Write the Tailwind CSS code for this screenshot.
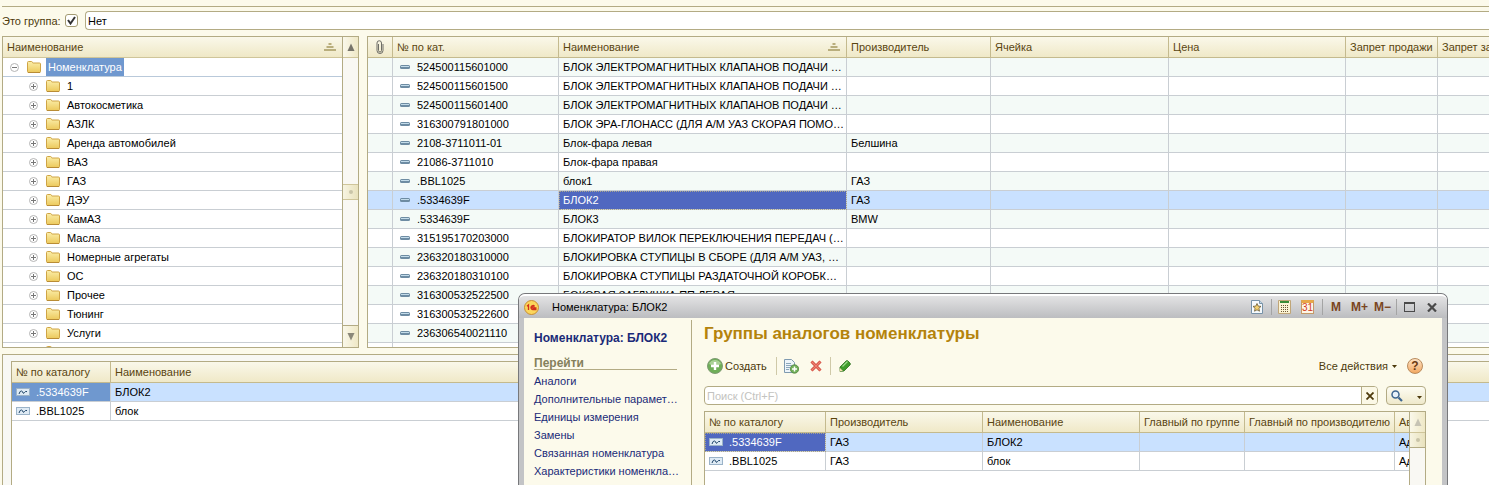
<!DOCTYPE html>
<html lang="ru">
<head>
  <meta charset="UTF-8" />
  <meta name="viewport" content="width=device-width, initial-scale=1.0"/>
  <title>Номенклатура</title>
  <script src="https://cdn.jsdelivr.net/npm/@tailwindcss/browser@4"></script>
</head>
<body class="relative flex h-screen flex-col overflow-hidden bg-[#fcfaeb] pl-[2px] font-['Liberation_Sans',Arial,sans-serif] text-[11px] leading-[18px] text-black">

  <!-- shared icons -->
  <svg class="absolute h-0 w-0">
    <linearGradient id="gold" x2="0" y2="1"><stop stop-color="#fbeeaa"/><stop offset="1" stop-color="#ecc95c"/></linearGradient>
    <symbol id="folder" viewBox="0 0 14 12">
      <path d="M.5 1.500q0-1 1-1h3q.8 0 1 1l.3.500h6.700q1 0 1 1v7.500q0 1-1 1h-11q-1 0-1-1z" fill="url(#gold)" stroke="#cfa445"/>
      <path d="M1 11.500h12" stroke="#b98c35"/>
    </symbol>
    <symbol id="plus" viewBox="0 0 9 9">
      <circle cx="4.500" cy="4.500" r="4" fill="#fff" stroke="#b4b4b4"/>
      <path d="M2 4.500h5M4.500 2v5" stroke="#777"/>
    </symbol>
    <symbol id="minus" viewBox="0 0 9 9">
      <circle cx="4.500" cy="4.500" r="4" fill="#fff" stroke="#b4b4b4"/>
      <path d="M2 4.500h5" stroke="#777"/>
    </symbol>
    <symbol id="sort" viewBox="0 0 12 8">
      <path d="M4.500 0h3v2h-3zM2.500 3h7v2h-7zM0 6h12v2H0z" fill="#b9ae7c"/>
    </symbol>
    <symbol id="item" viewBox="0 0 10 4">
      <rect width="10" height="4" rx="1.500" fill="#6d8ca3"/>
      <path d="M1 1.500h8" stroke="#c3dcea"/>
    </symbol>
    <symbol id="record" viewBox="0 0 14 8">
      <rect x=".5" y=".5" width="13" height="7" fill="#dfebf5" stroke="#9bb3c8"/>
      <path d="M3 6q1-3.500 2.500-3t1.500 2q1 .8 1.500-.5t2.500-1" fill="none" stroke="#1d4468"/>
    </symbol>
    <symbol id="up" viewBox="0 0 8 8"><path d="M4 .5L7.500 8h-7z"/></symbol>
  </svg>

  <div class="mt-[6px] h-px shrink-0 bg-[#b3ab84]"></div>

  <!-- filter -->
  <div class="mt-1 flex h-[19px] shrink-0 items-center">
    <label for="isGroup" class="w-[63px] whitespace-nowrap text-[#4d3a0c]">Это группа:</label>
    <span class="relative flex h-[13px] w-[13px]">
      <input id="isGroup" type="checkbox" checked class="h-[13px] w-[13px] appearance-none rounded-[3px] border border-[#a39b72] bg-white">
      <svg class="pointer-events-none absolute left-[2px] top-[2px] h-[9px] w-[9px]" viewBox="0 0 9 9"><path d="M1 4l2.500 3.500L8 1" fill="none" stroke="#333" stroke-width="2"/></svg>
    </span>
    <input type="text" value="Нет" aria-label="Это группа" class="ml-[7px] h-[19px] flex-1 rounded-l-[4px] border border-r-0 border-[#b3ab84] bg-white px-[2px]">
  </div>

  <div class="mt-[6px] flex h-[312px] shrink-0">
    <!-- groups tree -->
    <div class="flex w-[357px] shrink-0 border border-[#b3ab84] bg-white">
      <div class="flex-1 overflow-hidden">
        <div class="flex h-[21px] items-center justify-between border-b border-[#cfc59a] bg-linear-to-b from-[#faf8ea] to-[#efe8c6] pl-1 pr-[6px] text-[#5a4510]">
          Наименование
          <svg class="h-2 w-3"><use href="#sort"/></svg>
        </div>
        <ul id="tree"></ul>
      </div>
      <div class="flex w-4 flex-col border-l border-[#b3ab84] bg-[#f9f8f3]">
        <button aria-label="Вверх" class="flex h-[21px] items-center justify-center border-b border-[#cfc59a] bg-linear-to-r from-[#faf8ea] to-[#efe8c6]"><svg class="h-2 w-2 fill-[#77746a]"><use href="#up"/></svg></button>
        <div class="flex-1"></div>
        <div class="flex h-4 items-center justify-center border-y border-[#cfc59a] bg-linear-to-r from-[#f7f4e2] to-[#e9e2bd]"><span class="h-1 w-1 rounded-full bg-[#c9c4a8]"></span></div>
        <div class="h-[125px]"></div>
        <button aria-label="Вниз" class="flex h-[22px] items-center justify-center border-t border-[#b3ab84] bg-linear-to-r from-[#faf8ea] to-[#efe8c6]"><svg class="h-2 w-2 rotate-180 fill-[#8a8779]"><use href="#up"/></svg></button>
      </div>
    </div>

    <!-- items list -->
    <div class="ml-2 flex-1 overflow-hidden border border-r-0 border-[#b3ab84] bg-white">
      <table class="w-[1200px] table-fixed border-separate border-spacing-0">
        <colgroup>
          <col class="w-[25px]"><col class="w-[166px]"><col class="w-[288px]"><col class="w-[144px]"><col class="w-[178px]"><col class="w-[177px]"><col class="w-[92px]"><col>
        </colgroup>
        <thead>
          <tr class="h-[21px] bg-linear-to-b from-[#faf8ea] to-[#efe8c6] text-left text-[#5a4510] *:h-[21px] *:overflow-hidden *:whitespace-nowrap *:border-b *:border-r *:border-[#c4ba8e] *:p-0 *:pl-1 *:font-normal">
            <th aria-label="Файлы"><svg class="ml-1 h-[14px] w-2" viewBox="0 0 8 14"><path d="M2.500 4v6.500a1.500 1.500 0 003 0V3a2 2 0 00-4.500 0v7.500a3 3 0 006 0V4" fill="none" stroke="#6d6d66"/></svg></th>
            <th>№ по кат.</th>
            <th><span class="flex items-center justify-between pr-[6px]">Наименование<svg class="h-2 w-3"><use href="#sort"/></svg></span></th>
            <th>Производитель</th>
            <th>Ячейка</th>
            <th>Цена</th>
            <th>Запрет продажи</th>
            <th>Запрет закупки</th>
          </tr>
        </thead>
        <tbody id="items"></tbody>
      </table>
    </div>
  </div>

  <!-- analogs -->
  <div class="mt-[6px] flex-1 overflow-hidden border-l border-t border-[#b3ab84] bg-[#f8f8f4] pl-2 pt-[6px]">
    <div class="h-full border-l border-t border-[#b3ab84] bg-white">
      <table class="w-full table-fixed border-separate border-spacing-0">
        <colgroup><col class="w-[99px]"><col></colgroup>
        <thead>
          <tr class="bg-linear-to-b from-[#faf8ea] to-[#efe8c6] text-left text-[#5a4510] *:h-[21px] *:whitespace-nowrap *:border-b *:border-[#c4ba8e] *:p-0 *:pl-1 *:font-normal">
            <th class="border-r">№ по каталогу</th>
            <th>Наименование</th>
          </tr>
        </thead>
        <tbody>
          <tr class="bg-[#c9e1ff] *:h-[19px] *:border-b *:border-[#c9ced3] *:p-0 *:pl-1">
            <td class="border-r bg-[#6f98cf] text-white"><span class="flex items-center gap-[6px]"><svg class="h-2 w-[14px]"><use href="#record"/></svg>.5334639F</span></td>
            <td>БЛОК2</td>
          </tr>
          <tr class="*:h-[19px] *:border-b *:border-[#c9ced3] *:p-0 *:pl-1">
            <td class="border-r"><span class="flex items-center gap-[6px]"><svg class="h-2 w-[14px]"><use href="#record"/></svg>.BBL1025</span></td>
            <td>блок</td>
          </tr>
        </tbody>
      </table>
    </div>
  </div>

  <!-- item window -->
  <div class="absolute bottom-0 left-[518px] right-[41px] top-[293px] flex flex-col rounded-t-[7px] border border-b-0 border-[#77787b] bg-[#c3c4c6]">
    <div class="flex h-6 shrink-0 items-center rounded-t-[6px] border-t-2 border-white bg-linear-to-b from-[#e3e3e4] to-[#bcbdc0] pl-[5px] pr-[10px]">
      <svg class="h-[15px] w-[15px]" viewBox="0 0 15 15">
        <circle cx="7.500" cy="7.500" r="7" fill="#fbd65b" stroke="#c88d33"/>
        <path d="M3 6.300l1.500-1.300v5M10.500 6.200a2 2 0 10-1.500 3.300h3.500M10 7.300a1 1 0 10-1 .7h3.500" fill="none" stroke="#d2301c" stroke-width="1.300"/>
      </svg>
      <h1 class="ml-[13px] flex-1">Номенклатура: БЛОК2</h1>
      <button aria-label="Избранное"><svg class="h-[14px] w-[12px]" viewBox="0 0 12 14"><path d="M.5.5h8l3 3v10H.5z" fill="#f5f9fc" stroke="#7792a8"/><path d="M8.500.5v3h3" fill="#c6d9e6" stroke="#7792a8"/><path d="M6 3.500l1.200 2.600 2.800.3-2.100 1.900.6 2.900L6 9.800l-2.500 1.400.6-2.900L2 6.400l2.800-.3z" fill="#f2cf70" stroke="#6b5a35" stroke-width=".8"/></svg></button>
      <span class="ml-2 h-4 w-px bg-[#a4a4a4]"></span>
      <button aria-label="Калькулятор" class="ml-[6px]"><svg class="h-[14px] w-[13px]" viewBox="0 0 13 14"><path d="M.5.5h12v13H.5z" fill="#fbf3d3" stroke="#c0a678"/><path d="M2 1h9v2H2z" fill="#398b34"/><path d="M3 5.500h8M3 7.500h8M3 9.500h8M3 11.500h8" stroke="#6c5634" stroke-dasharray="1 1"/></svg></button>
      <button aria-label="Календарь" class="ml-[10px] h-[14px] w-[13px] border border-t-[3px] border-[#c49a68] border-t-[#e8a848] bg-[#fdf6e6] text-[10px] leading-[10px] text-[#d33a1c]">31</button>
      <span class="ml-2 h-4 w-px bg-[#a4a4a4]"></span>
      <button class="ml-2 w-[10px] text-[12px] font-bold text-[#7a4522]">M</button>
      <button class="ml-[10px] w-[17px] text-[12px] font-bold text-[#7a4522]">M+</button>
      <button class="ml-[6px] w-[16px] text-[12px] font-bold text-[#7a4522]">M−</button>
      <span class="ml-[6px] h-4 w-px bg-[#a4a4a4]"></span>
      <button aria-label="Развернуть" class="ml-[7px] h-[10px] w-[11px] border border-t-2 border-[#4a4a4a]"></button>
      <button aria-label="Закрыть" class="ml-3"><svg class="h-[9px] w-[10px]" viewBox="0 0 10 9"><path d="M1 .5l8 8M9 .5l-8 8" stroke="#4a4a4a" stroke-width="2.200"/></svg></button>
    </div>

    <div class="mx-[5px] flex flex-1 overflow-hidden bg-[#fcfaeb]">
      <nav class="mt-[2px] w-[168px] shrink-0 border-r border-[#b3ab84] pl-[10px] pr-[14px] text-[#1a2a78]">
        <h2 class="mt-[9px] whitespace-nowrap text-[12px] font-bold">Номенклатура: БЛОК2</h2>
        <h3 class="mt-2 h-[15px] border-b border-[#b3ab84] text-[12px] leading-[16px] font-bold text-[#85805c]">Перейти</h3>
        <ul class="mt-[2px] whitespace-nowrap">
          <li><a href="#">Аналоги</a></li>
          <li><a href="#">Дополнительные парамет…</a></li>
          <li><a href="#">Единицы измерения</a></li>
          <li><a href="#">Замены</a></li>
          <li><a href="#">Связанная номенклатура</a></li>
          <li><a href="#">Характеристики номенкла…</a></li>
          <li><a href="#">Штрихкоды</a></li>
        </ul>
      </nav>

      <main class="flex min-w-0 flex-1 flex-col pl-3 pr-4">
        <h2 class="mt-[5px] text-[17px] leading-[22px] font-bold text-[#b4830c]">Группы аналогов номенклатуры</h2>
        <div class="mt-[11px] flex h-5 items-center text-[#4d3a0c]">
          <button class="ml-[3px] flex w-[61px] items-center gap-[2px]">
            <svg class="h-4 w-4 shrink-0" viewBox="0 0 16 16"><circle cx="8" cy="8" r="7.500" fill="#6fae58" stroke="#7f9b74"/><path d="M2 6a6.500 6.500 0 0112 0q-6 3-12 0z" fill="#a9d196"/><path d="M8 4v8M4 8h8" stroke="#fff" stroke-width="2.400"/></svg>
            Создать
          </button>
          <span class="ml-2 h-[18px] w-px bg-[#cfc9a8]"></span>
          <button aria-label="Скопировать" class="ml-[7px]"><svg class="h-[15px] w-[15px]" viewBox="0 0 15 15"><path d="M.5.5h7l3 3v10H.5z" fill="#eef5fa" stroke="#7f9ab0"/><path d="M2 4.500h5M2 6.500h6M2 8.500h4M2 10.500h3" stroke="#8ba7bb"/><circle cx="10.500" cy="10" r="4.200" fill="#72b05b" stroke="#4c8139" stroke-width=".8"/><path d="M10.500 7.500v5M8 10h5" stroke="#fff" stroke-width="1.500"/></svg></button>
          <button aria-label="Удалить" class="ml-[11px]"><svg class="h-3 w-3" viewBox="0 0 12 12"><path d="M1.500 1.500l9 9M10.500 1.500l-9 9" stroke="#cf4a3c" stroke-width="3"/><path d="M1.500 1.500l9 9M10.500 1.500l-9 9" stroke="#ee8173" stroke-width="1.200"/></svg></button>
          <span class="ml-2 h-[18px] w-px bg-[#cfc9a8]"></span>
          <button aria-label="Изменить" class="ml-2"><svg class="h-3 w-3" viewBox="0 0 12 12"><path d="M1 7l6-6q1-.8 2 0l2 2q.8 1 0 2l-6 6-4 .5z" fill="#3f9b2c" stroke="#2b6d1e" stroke-width=".8"/><path d="M3.500 6.500l5-5" stroke="#9ad989" stroke-width="1.200"/><path d="M1 8l3 3-3.500.500z" fill="#f1dfb0"/></svg></button>
          <button class="ml-auto flex items-center gap-1">Все действия<svg class="h-[3px] w-[5px]" viewBox="0 0 5 3"><path d="M0 0h5L2.500 3z" fill="#4d3a0c"/></svg></button>
          <button aria-label="Справка" class="ml-[10px] mr-[3px] h-4 w-4 rounded-full border border-[#b98a5c] bg-linear-to-b from-[#fde3c4] to-[#f2a860] text-[12px] leading-[14px] font-bold text-[#6b3a12]">?</button>
        </div>
        <div class="mt-[10px] flex h-[19px] shrink-0">
          <div class="flex flex-1 overflow-hidden rounded-[4px] border border-[#b3ab84] bg-white">
            <input type="text" placeholder="Поиск (Ctrl+F)" aria-label="Поиск" class="min-w-0 flex-1 px-[2px] placeholder:text-[#c3c3c0]">
            <button aria-label="Очистить" class="flex w-4 items-center justify-center border-l border-[#b3ab84] bg-[#fbf8e6]"><svg class="h-2 w-2" viewBox="0 0 8 8"><path d="M.5.5l7 7M7.500.5l-7 7" stroke="#4d3a0c" stroke-width="1.800"/></svg></button>
          </div>
          <button aria-label="Найти" class="ml-2 flex w-10 items-center justify-between rounded-[4px] border border-[#b3ab84] bg-linear-to-b from-[#fdfcf3] to-[#efe9cb] pl-1 pr-[3px]">
            <svg class="h-3 w-3" viewBox="0 0 12 12"><circle cx="4.500" cy="4.500" r="3.500" fill="#e6f1fa" stroke="#3e6690" stroke-width="1.500"/><path d="M7.500 7.500l3.500 3.500" stroke="#3e6690" stroke-width="2.200"/></svg>
            <svg class="mt-[3px] h-[3px] w-[5px]" viewBox="0 0 5 3"><path d="M0 0h5L2.500 3z" fill="#4d3a0c"/></svg>
          </button>
        </div>
        <div class="mt-[6px] flex flex-1 overflow-hidden border border-b-0 border-[#b3ab84] bg-white">
          <div class="min-w-0 flex-1 overflow-hidden">
            <table class="w-[780px] table-fixed border-separate border-spacing-0">
              <colgroup><col class="w-[121px]"><col class="w-[157px]"><col class="w-[157px]"><col class="w-[105px]"><col class="w-[150px]"><col></colgroup>
              <thead>
                <tr class="bg-linear-to-b from-[#faf8ea] to-[#efe8c6] text-left text-[#5a4510] *:h-[21px] *:whitespace-nowrap *:border-b *:border-r *:border-[#c4ba8e] *:p-0 *:pl-1 *:font-normal">
                  <th>№ по каталогу</th><th>Производитель</th><th>Наименование</th><th>Главный по группе</th><th>Главный по производителю</th><th>Автор</th>
                </tr>
              </thead>
              <tbody>
                <tr class="bg-[#c9e1ff] *:h-[19px] *:border-b *:border-r *:border-[#c9ced3] *:p-0 *:pl-1">
                  <td class="bg-[#5068c0] text-white outline-1 -outline-offset-1 outline-dotted outline-[#a9a58c]"><span class="flex items-center gap-[6px]"><svg class="h-2 w-[14px]"><use href="#record"/></svg>.5334639F</span></td>
                  <td>ГАЗ</td><td>БЛОК2</td><td></td><td></td><td>Администратор</td>
                </tr>
                <tr class="*:h-[19px] *:border-b *:border-r *:border-[#c9ced3] *:p-0 *:pl-1">
                  <td><span class="flex items-center gap-[6px]"><svg class="h-2 w-[14px]"><use href="#record"/></svg>.BBL1025</span></td>
                  <td>ГАЗ</td><td>блок</td><td></td><td></td><td>Администратор</td>
                </tr>
              </tbody>
            </table>
          </div>
          <div class="flex w-4 flex-col border-l border-[#b3ab84] bg-[#f9f8f3]">
            <button aria-label="Вверх" class="flex h-[21px] items-center justify-center border-b border-[#cfc59a] bg-linear-to-r from-[#faf8ea] to-[#efe8c6]"><svg class="h-2 w-2 fill-[#c6c3b4]"><use href="#up"/></svg></button>
            <div class="flex h-[15px] items-center justify-center border-b border-[#b3ab84] bg-linear-to-r from-[#f7f4e2] to-[#e9e2bd]"><span class="h-1 w-1 rounded-full bg-[#c9c4a8]"></span></div>
          </div>
        </div>
      </main>
    </div>
  </div>

  <script>
    const groups = ["1", "Автокосметика", "АЗЛК", "Аренда автомобилей", "ВАЗ", "ГАЗ", "ДЭУ", "КамАЗ", "Масла", "Номерные агрегаты", "ОС", "Прочее", "Тюнинг", "Услуги", ""];
    const items = [
      ["524500115601000", "БЛОК ЭЛЕКТРОМАГНИТНЫХ КЛАПАНОВ ПОДАЧИ …", ""],
      ["524500115601500", "БЛОК ЭЛЕКТРОМАГНИТНЫХ КЛАПАНОВ ПОДАЧИ …", ""],
      ["524500115601400", "БЛОК ЭЛЕКТРОМАГНИТНЫХ КЛАПАНОВ ПОДАЧИ …", ""],
      ["316300791801000", "БЛОК ЭРА-ГЛОНАСС (ДЛЯ А/М УАЗ СКОРАЯ ПОМО…", ""],
      ["2108-3711011-01", "Блок-фара левая", "Белшина"],
      ["21086-3711010", "Блок-фара правая", ""],
      [".BBL1025", "блок1", "ГАЗ"],
      [".5334639F", "БЛОК2", "ГАЗ"],
      [".5334639F", "БЛОК3", "BMW"],
      ["315195170203000", "БЛОКИРАТОР ВИЛОК ПЕРЕКЛЮЧЕНИЯ ПЕРЕДАЧ (…", ""],
      ["236320180310000", "БЛОКИРОВКА СТУПИЦЫ В СБОРЕ (ДЛЯ А/М УАЗ, …", ""],
      ["236320180310100", "БЛОКИРОВКА СТУПИЦЫ РАЗДАТОЧНОЙ КОРОБК…", ""],
      ["316300532522500", "БОКОВАЯ ЗАГЛУШКА ПП ЛЕВАЯ", ""],
      ["316300532522600", "", ""],
      ["236306540021110", "", ""],
      ["", "", ""]
    ];
    const selected = 7;

    document.getElementById("tree").innerHTML = `
      <li class="flex h-[19px] items-center border-b border-[#b9c9da] pl-[7px]">
        <button aria-label="Свернуть"><svg class="h-[9px] w-[9px]"><use href="#minus"/></svg></button>
        <svg class="ml-2 h-3 w-[14px]"><use href="#folder"/></svg>
        <span class="ml-[5px] bg-[#6f98cf] px-[2px] text-white">Номенклатура</span>
      </li>` + groups.map(name => `
      <li class="flex h-[19px] items-center border-b border-[#c9ced3] pl-[26px]">
        <button aria-label="Развернуть"><svg class="h-[9px] w-[9px]"><use href="#plus"/></svg></button>
        <svg class="ml-2 h-3 w-[14px]"><use href="#folder"/></svg>
        <span class="ml-[7px]">${name}</span>
      </li>`).join("");

    document.getElementById("items").innerHTML = items.map(([code, name, maker], i) => `
      <tr class="${i === selected ? "bg-[#c9e1ff]" : "odd:bg-[#f4faf7]"} *:h-[19px] *:overflow-hidden *:whitespace-nowrap *:border-b *:border-r *:border-[#c9ced3] *:p-0 *:pl-1">
        <td></td>
        <td>${code ? `<span class="flex items-center gap-[7px] pl-[3px]"><svg class="h-1 w-[10px]"><use href="#item"/></svg>${code}</span>` : ""}</td>
        <td class="${i === selected ? "bg-[#5068c0] text-white outline-1 -outline-offset-1 outline-dotted outline-[#a9a58c]" : ""}">${name}</td>
        <td>${maker}</td>
        <td></td><td></td><td></td><td></td>
      </tr>`).join("");
  </script>
</body>
</html>
